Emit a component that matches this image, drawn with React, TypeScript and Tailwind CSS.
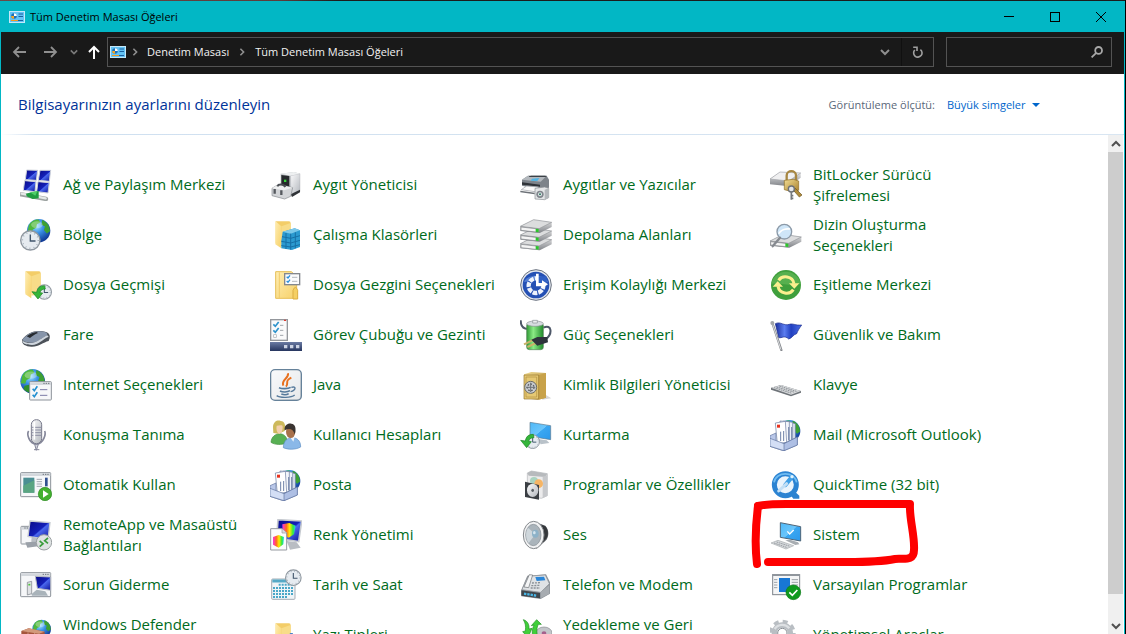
import type { ReactNode } from 'react'

type DiscProps = { cx: number; cy: number; r: number }

/** Shared gradients, referenced by every control panel icon. */
function IconDefs() {
  return (
    <svg className="absolute h-0 w-0" aria-hidden="true">
      <defs>
        <linearGradient id="screen" x1="0" y1="0" x2="1" y2="1">
          <stop offset="0" stopColor="#0a0a86" />
          <stop offset="0.5" stopColor="#1420b8" />
          <stop offset="0.55" stopColor="#4a68ee" />
          <stop offset="1" stopColor="#0b1096" />
        </linearGradient>
        <linearGradient id="sky" x1="0" y1="0" x2="1" y2="1">
          <stop offset="0" stopColor="#4db8f8" />
          <stop offset="0.5" stopColor="#6cc6fb" />
          <stop offset="0.52" stopColor="#3aa7f2" />
          <stop offset="1" stopColor="#2c98ea" />
        </linearGradient>
        <radialGradient id="sea" cx="0.4" cy="0.3" r="0.75">
          <stop offset="0" stopColor="#a5e6ff" />
          <stop offset="0.4" stopColor="#3b92e6" />
          <stop offset="1" stopColor="#0a2f8c" />
        </radialGradient>
        <linearGradient id="silver" x1="0" y1="0" x2="1" y2="1">
          <stop offset="0" stopColor="#fbfbfc" />
          <stop offset="1" stopColor="#b4b8be" />
        </linearGradient>
        <linearGradient id="steel" x1="0" y1="0" x2="0" y2="1">
          <stop offset="0" stopColor="#e9e9ea" />
          <stop offset="1" stopColor="#808388" />
        </linearGradient>
        <linearGradient id="folder" x1="0" y1="0" x2="1" y2="1">
          <stop offset="0" stopColor="#ffedb2" />
          <stop offset="1" stopColor="#f6d169" />
        </linearGradient>
        <linearGradient id="leaf" x1="0" y1="0" x2="1" y2="0">
          <stop offset="0" stopColor="#2f9a35" />
          <stop offset="0.4" stopColor="#8bea85" />
          <stop offset="1" stopColor="#1f8a2a" />
        </linearGradient>
        <linearGradient id="gold" x1="0" y1="0" x2="1" y2="1">
          <stop offset="0" stopColor="#f2dd94" />
          <stop offset="1" stopColor="#a9812c" />
        </linearGradient>
        <linearGradient id="navy" x1="0" y1="0" x2="0" y2="1">
          <stop offset="0" stopColor="#6b7ba3" />
          <stop offset="1" stopColor="#26355f" />
        </linearGradient>
        <linearGradient id="flag" x1="0" y1="0" x2="1" y2="0">
          <stop offset="0" stopColor="#1b2f9c" />
          <stop offset="0.35" stopColor="#5b7df0" />
          <stop offset="0.6" stopColor="#2140c0" />
          <stop offset="1" stopColor="#4c6fe6" />
        </linearGradient>
        <linearGradient id="rainbow" x1="0" y1="0" x2="1" y2="0">
          <stop offset="0" stopColor="#ff30e0" />
          <stop offset="0.3" stopColor="#ff6a20" />
          <stop offset="0.55" stopColor="#fff000" />
          <stop offset="0.8" stopColor="#30e840" />
          <stop offset="1" stopColor="#20d8f0" />
        </linearGradient>
      </defs>
    </svg>
  )
}

function Globe({ cx, cy, r }: DiscProps) {
  return (
    <g transform={`translate(${cx} ${cy}) scale(${r / 40})`}>
      <circle r="40" fill="url(#sea)" />
      <path d="M-34-18C-26-34-10-39 0-38L6-28-6-22-8-10-20-4-24 8-38 6Z" fill="#4fb83c" />
      <path d="M12-37C30-30 38-16 39 2L28 10 18-2 22-14 10-20Z" fill="#3da033" />
      <path d="M-26 14-8 10 4 22-2 38C-16 37-26 30-30 24Z" fill="#2f8f2c" />
      <ellipse cx="-6" cy="-20" rx="20" ry="12" fill="#fff" opacity="0.3" />
    </g>
  )
}

function Clock({ cx, cy, r }: DiscProps) {
  return (
    <g transform={`translate(${cx} ${cy}) scale(${r / 30})`}>
      <circle r="28" fill="#e6ebf0" stroke="#8f979f" strokeWidth="4" />
      <circle r="23" fill="none" stroke="#8b98a5" strokeWidth="4" strokeDasharray="2 10.04" />
      <path d="M0-17V2H15" fill="none" stroke="#41566b" strokeWidth="4" />
    </g>
  )
}

function BackArrow() {
  return <path d="M24-16C8-16 2-8 0 4L-14 2 4 24 18 6 10 5C12-2 16-6 26-6Z" fill="#35b53a" stroke="#1d8425" strokeWidth="2" />
}

function Frame({ x, y, w, h }: { x: number; y: number; w: number; h: number }) {
  return (
    <g>
      <rect x={x} y={y} width={w} height={h} rx="2" fill="#f6f7f9" stroke="#8c9299" strokeWidth="3" />
      <path d={`M${x + 1} ${y + 6}H${x + w - 1}`} stroke="#d3d7dc" strokeWidth="8" />
      <path d={`M${x + w - 24} ${y + 5}h20`} stroke="#6d747c" strokeWidth="3" strokeDasharray="4 3" />
    </g>
  )
}

const folder = (
  <>
    <path d="M17 7H57Q62 7 62 12V72H17Z" fill="#f3cd68" />
    <path d="M16 6 34 22V88L16 76Z" fill="url(#folder)" />
    <path d="M34 22 62 12V74L34 80Z" fill="#f8dc88" />
  </>
)

const mail = (
  <>
    <Globe cx={58} cy={36} r={33} />
    <path d="M0 50 18 42V66L42 78V96L0 82Z" fill="#b9c7e8" stroke="#5f729f" strokeWidth="2" />
    <path d="M50 7 76 14V64L50 70Z" fill="#dfe6f3" stroke="#66789e" strokeWidth="2" />
    <path d="M40 6 68 10V67L42 72Z" fill="#edf1f8" stroke="#66789e" strokeWidth="2" />
    <path d="M30 6 58 8V70L34 73Z" fill="#f4f6fb" stroke="#66789e" strokeWidth="2" />
    <path d="M16 12 46 7 50 70 22 74Z" fill="#fff" stroke="#66789e" strokeWidth="2" />
    <path d="M32 38V66M41 36V66M56 24V64M65 24V62" stroke="#6f82a8" strokeWidth="3" />
    <path d="M21 17h9v9h-9Z" fill="#e8321e" />
    <path d="M0 58 42 74 82 54V78L42 95 0 82Z" fill="#d3def5" stroke="#5f729f" strokeWidth="2" />
    <path d="M42 74 82 54V78L42 95Z" fill="#aebfe4" stroke="#5f729f" strokeWidth="2" />
  </>
)

const network = (
  <>
    <g stroke="#cfd3da" strokeWidth="3" fill="url(#screen)">
      <path d="M20 3 53 4 49 34 16 32Z" />
      <path d="M60 4 92 4 88 37 55 34Z" />
      <path d="M14 35 48 38 45 68 10 64Z" />
      <path d="M54 38 88 41 84 72 50 68Z" />
    </g>
    <path d="M4 76 78 90" stroke="#9da3a1" strokeWidth="13" strokeLinecap="round" />
    <path d="M5 74 77 88" stroke="#e4e8e6" strokeWidth="7" strokeLinecap="round" />
    <path d="M18 74 34 70 56 66 56 88 38 90 20 82Z" fill="#1f9c40" />
    <path d="M30 70 52 67 46 80Z" fill="#4fce68" />
  </>
)

const region = (
  <>
    <Globe cx={56} cy={35} r={35} />
    <Clock cx={31} cy={64} r={31} />
  </>
)

const fileHistory = (
  <>
    {folder}
    <Clock cx={73} cy={69} r={23} />
    <g transform="translate(50 66)">
      <BackArrow />
    </g>
  </>
)

const mouse = (
  <>
    <path d="M6 62C20 44 40 34 62 36 82 37 92 44 89 58L86 66C70 70 56 84 34 83 18 82 4 76 6 62Z" fill="#4c5259" />
    <path d="M8 61C22 44 42 35 62 37 78 38 86 44 80 50 64 56 52 70 36 71 22 72 8 68 8 61Z" fill="#8795aa" />
    <path d="M7 64C12 71 24 73 36 72 52 70 64 57 82 49L86 53C68 60 56 78 36 78 18 78 6 74 7 64Z" fill="#cfd6de" />
    <path d="M20 52C32 44 40 40 50 39L54 42C44 46 38 51 30 57Z" fill="#272b30" />
  </>
)

const internet = (
  <>
    <Globe cx={38} cy={37} r={37} />
    <Frame x={29} y={38} w={65} h={55} />
    <path d="M38 59 43 65 52 52M38 77 43 83 52 70" fill="none" stroke="#2490d0" strokeWidth="5" />
    <path d="M60 62H82M60 79H82" stroke="#7b7ba6" strokeWidth="3" />
  </>
)

const microphone = (
  <>
    <path d="M26 36C20 44 26 74 49 76 72 74 78 44 74 36" fill="none" stroke="#85879a" strokeWidth="5" />
    <rect x="34" y="2" width="31" height="72" rx="15" fill="url(#silver)" stroke="#77798a" strokeWidth="3" />
    <path d="M35 25H64M35 33H64M35 41H64M35 49H64" stroke="#8e90a4" strokeWidth="3" />
    <path d="M43 8V62" stroke="#fff" strokeWidth="5" />
    <path d="M44 76 49 94 55 76ZM42 92H58" fill="#d6d7df" stroke="#85879a" strokeWidth="3" />
  </>
)

const autoplay = (
  <>
    <Frame x={2} y={11} w={90} h={72} />
    <rect x="10" y="26" width="33" height="45" fill="#4b8f93" />
    <path d="M10 71V50L43 34V71Z" fill="#5aa581" />
    <path d="M50 31H66M50 38H66M50 45H66M50 52H66" stroke="#a2a8b0" strokeWidth="3" />
    <path d="M79 26V52" stroke="#31508f" strokeWidth="8" />
    <circle cx="75" cy="75" r="20" fill="#43b02f" stroke="#2a8a20" strokeWidth="2" />
    <path d="M69 64 86 75 69 86Z" fill="#fff" />
  </>
)

const remoteApp = (
  <>
    <Frame x={3} y={22} w={34} h={53} />
    <path d="M30 6 90 11 84 62 24 52Z" fill="url(#screen)" stroke="#c9cdd2" strokeWidth="4" />
    <path d="M36 54 60 58 56 72 34 68Z" fill="#b9bec5" />
    <path d="M16 70 48 68 54 82 22 86Z" fill="#9ba1a9" />
    <circle cx="72" cy="70" r="23" fill="#dfe3e3" stroke="#9a9fa2" strokeWidth="3" />
    <path d="M59 66 69 74 59 83M84 57 74 65 84 73" fill="none" stroke="#3a9d3c" strokeWidth="5" />
  </>
)

const troubleshoot = (
  <>
    <Frame x={2} y={11} w={90} h={72} />
    <path d="M22 40 35 37V74L22 78Z" fill="#dfe1e4" stroke="#777c83" strokeWidth="2" />
    <path d="M25 47H31" stroke="#4cc339" strokeWidth="5" />
    <path d="M46 22 92 24V64L52 58Z" fill="url(#screen)" stroke="#b6bac2" strokeWidth="3" />
    <path d="M34 76 50 62 76 67 84 80H36Z" fill="#a9b3ba" />
  </>
)

const firewall = (
  <>
    <Globe cx={65} cy={30} r={28} />
    <path d="M4 36 26 28 74 38V96H4Z" fill="#a5553c" />
    <path d="M4 36 26 28 74 38 56 44Z" fill="#d39a7c" />
    <path d="M4 52 74 56M4 68 74 72M4 84H74M24 40V52M44 42V54M14 54V68M36 55V70M58 44V70M26 70V84" stroke="#e0b49e" strokeWidth="2" />
  </>
)

const deviceManager = (
  <>
    <path d="M32 14 72 9 90 14V66L52 76 32 66Z" fill="#c0c3c7" />
    <path d="M62 20 90 14V68L62 74Z" fill="url(#silver)" stroke="#a4a8ad" strokeWidth="1" />
    <path d="M32 14 72 9 90 14 60 20Z" fill="#eef0f1" />
    <path d="M34 18 58 21V56L34 50Z" fill="#26292c" />
    <rect x="42" y="32" width="7" height="7" fill="#38d43b" />
    <path d="M62 76 90 62V70L66 84Z" fill="#303337" />
    <path d="M6 58 26 46 68 56 62 82 44 90 6 80Z" fill="#d3d5d8" stroke="#85898e" strokeWidth="2" />
    <path d="M6 58 42 64 68 56 26 46Z" fill="#eff0f1" />
    <path d="M14 60V74M34 64V78" stroke="#55595e" strokeWidth="7" />
    <path d="M22 52C26 44 40 44 46 54" fill="none" stroke="#4a4e53" strokeWidth="6" />
  </>
)

const workFolders = (
  <>
    {folder}
    <path d="M38 38 74 28 90 34V84L66 93 34 88V66Z" fill="#2b9ad0" />
    <path d="M38 38 74 28 90 34 62 44Z" fill="#7cc9ea" />
    <path d="M62 44V92M36 53 62 58 90 50M34 67 62 72 90 64M34 80 62 84 90 77M48 42V90M76 40V88" fill="none" stroke="#1670a6" strokeWidth="3" />
  </>
)

const explorerOptions = (
  <>
    <path d="M17 8H64L80 22V88H17Z" fill="url(#folder)" stroke="#e7bf57" strokeWidth="3" />
    <path d="M28 10V88" stroke="#f1cc6a" strokeWidth="3" />
    <rect x="44" y="14" width="45" height="33" fill="#fcfcfd" stroke="#84888e" strokeWidth="4" />
    <path d="M50 23 54 27 60 19M50 36 54 40 60 32" fill="none" stroke="#2a8fdb" strokeWidth="4" />
    <path d="M66 25H82M66 37H82" stroke="#b4b8be" strokeWidth="3" />
    <path d="M69 64Q76 46 83 64V90H69Z" fill="#f5cf63" stroke="#dcae42" strokeWidth="3" />
  </>
)

const taskbar = (
  <>
    <rect x="2" y="2" width="50" height="62" fill="#fafafb" stroke="#94979c" strokeWidth="4" />
    <path d="M42 4H48" stroke="#df3b31" strokeWidth="4" />
    <path d="M10 16 16 22 26 9M10 34 16 40 26 27" fill="none" stroke="#2e93cc" strokeWidth="5" />
    <rect x="11" y="47" width="8" height="8" fill="none" stroke="#a9adb1" strokeWidth="2" />
    <path d="M30 19H40M30 34H40M30 49H40" stroke="#a1a5aa" strokeWidth="3" />
    <rect y="69" width="96" height="27" fill="url(#navy)" />
    <path d="M42 83h10M60 83h10M78 83h10" stroke="#cdd4e4" strokeWidth="10" />
  </>
)

const java = (
  <>
    <rect x="2" y="2" width="92" height="92" rx="13" fill="url(#silver)" stroke="#66829a" strokeWidth="4" />
    <rect x="5" y="5" width="86" height="86" rx="10" fill="#f7f8f9" opacity="0.75" />
    <path d="M54 13C58 28 32 32 40 50M64 26C42 36 58 42 48 53" fill="none" stroke="#e8701d" strokeWidth="6" />
    <path d="M27 56C36 60 54 60 62 55M30 66C38 70 52 70 60 65M34 75C42 78 50 78 56 74" fill="none" stroke="#55799b" strokeWidth="5" />
    <path d="M64 55C80 50 78 64 62 68" fill="none" stroke="#55799b" strokeWidth="4" />
    <path d="M20 80C30 87 64 87 74 78" fill="none" stroke="#55799b" strokeWidth="4" />
  </>
)

const users = (
  <>
    <path d="M3 70C4 52 18 44 30 44 44 46 52 54 52 72 36 78 14 78 3 70Z" fill="#58b053" stroke="#3f8b3c" strokeWidth="2" />
    <path d="M9 24C10 6 24 2 32 6 44 6 48 20 44 36L26 44 10 42Z" fill="#cdb95c" />
    <path d="M20 20C28 20 38 16 38 24 38 38 32 46 27 44 20 40 18 30 20 20Z" fill="#f3cfae" />
    <path d="M40 86C40 66 52 56 66 56 82 56 92 66 92 84 76 93 54 92 40 86Z" fill="#8ab8e8" stroke="#5a8cc2" strokeWidth="2" />
    <path d="M60 54H74L70 68Z" fill="#f1f5fa" />
    <ellipse cx="62" cy="38" rx="14" ry="19" fill="#a8714b" />
    <path d="M44 34C42 18 54 12 64 14 76 14 80 30 74 46 70 30 58 26 44 34Z" fill="#3a3431" />
  </>
)

const colorManagement = (
  <>
    <path d="M24 2 95 6 86 68 20 58Z" fill="url(#screen)" stroke="#c6cad0" strokeWidth="5" />
    <path d="M50 66 80 70 92 86 60 92Z" fill="#b9bdc3" />
    <path d="M37 16 58 12 77 20 72 46 56 56 38 46Z" fill="url(#rainbow)" />
    <path d="M2 29H36L50 42V93H2Z" fill="#fbfbfc" stroke="#95999f" strokeWidth="3" />
    <path d="M36 29V42H50" fill="#dadde1" stroke="#95999f" strokeWidth="2" />
    <path d="M9 54 26 48 42 54 40 76 26 86 9 77Z" fill="url(#rainbow)" />
  </>
)

const dateTime = (
  <>
    <rect x="5" y="30" width="70" height="61" rx="3" fill="#eff4f7" stroke="#a5adb5" strokeWidth="3" />
    <path d="M7 36H74" stroke="#55a9c6" strokeWidth="9" />
    <path d="M26 47H70M9 57H70M9 66H70M9 75H70M9 84H52" stroke="#4aa7c8" strokeWidth="6" strokeDasharray="6 3" />
    <Clock cx={70} cy={26} r={25} />
  </>
)

const fonts = (
  <>
    <g transform="translate(0 6)">{folder}</g>
    <path d="M44 92 60 42H68L86 92H74L70 78H58L54 92Z" fill="#4a86c8" />
  </>
)

const printer = (
  <>
    <path d="M6 32 24 20H80L87 32V56L60 62 6 50Z" fill="#7d838a" />
    <path d="M6 32 24 20H80L62 38Z" fill="#b3b8bd" />
    <path d="M26 22 34 20H76L80 24H28Z" fill="#3b4046" />
    <path d="M36 29 58 27 52 36 32 35Z" fill="#4fb4e4" />
    <path d="M6 40 60 47V53L6 47Z" fill="#2f3338" />
    <path d="M4 62 20 51 56 54 44 68Z" fill="#fafafa" stroke="#9b9fa4" strokeWidth="2" />
    <path d="M1 65 44 71V76L1 70Z" fill="#6d7278" />
    <path d="M45 58 74 54 86 58V86L74 92 45 90Z" fill="#e3e5e7" stroke="#8a8e93" strokeWidth="2" />
    <path d="M74 62 86 58V86L74 92Z" fill="#b4b8bc" />
    <circle cx="60" cy="76" r="11" fill="#80868c" />
    <circle cx="60" cy="76" r="6" fill="#dfe6ec" />
    <circle cx="60" cy="76" r="3" fill="#2e7a5c" />
  </>
)

function Drive() {
  return (
    <>
      <path d="M0 20 40 0 94 8V22L58 40 0 34Z" fill="url(#steel)" />
      <path d="M0 20 40 0 94 8 56 27Z" fill="#dcddde" stroke="#94979b" strokeWidth="2" />
      <path d="M2 22 55 28V38L2 32Z" fill="#f4f4f4" stroke="#85888d" strokeWidth="2" />
      <path d="M46 27 55 28V38L46 37Z" fill="#2cc52c" />
    </>
  )
}

const storage = (
  <>
    <g transform="translate(1 54)">
      <Drive />
    </g>
    <g transform="translate(1 28)">
      <Drive />
    </g>
    <g transform="translate(1 2)">
      <Drive />
    </g>
  </>
)

const easeOfAccess = (
  <>
    <circle cx="48" cy="48" r="46" fill="#e3e7ee" stroke="#6b7380" strokeWidth="3" />
    <circle cx="48" cy="48" r="40" fill="#2450b4" />
    <path d="M12 40C18 14 78 14 84 40 60 30 36 34 12 40Z" fill="#6f9ae6" opacity="0.6" />
    <circle cx="48" cy="50" r="22" fill="none" stroke="#eef3fc" strokeWidth="13" strokeDasharray="14 3.3" strokeDashoffset="4" pathLength="138" />
    <path d="M48 50V22H80V50Z" fill="#2f60c4" />
    <path d="M48 52V14H56V42H66V34L84 46 66 58V52Z" fill="#fff" />
  </>
)

const power = (
  <>
    <path d="M2 4C2 24 12 30 24 30" fill="none" stroke="#4d5768" strokeWidth="6" />
    <path d="M70 26C96 14 98 44 78 60" fill="none" stroke="#4d5768" strokeWidth="6" />
    <rect x="20" y="12" width="50" height="80" rx="8" fill="url(#leaf)" stroke="#58805a" strokeWidth="2" />
    <ellipse cx="45" cy="14" rx="25" ry="8" fill="#d7dce0" stroke="#8b9196" strokeWidth="2" />
    <path d="M38 4H52V12H38Z" fill="#eceef0" stroke="#8b9196" strokeWidth="2" />
    <path d="M12 76 42 62M22 84 48 72" stroke="#c9b268" strokeWidth="6" />
    <path d="M34 62 52 54 82 54 84 70 52 80Z" fill="#2e333c" />
  </>
)

const credentials = (
  <>
    <path d="M74 76 94 88 66 92Z" fill="#d6d6d6" />
    <path d="M12 16 34 9 78 12V86L54 92 12 88Z" fill="url(#gold)" />
    <path d="M56 18 78 12V86L56 92Z" fill="#c8a24a" />
    <path d="M12 18H56V90H12Z" fill="#e5c873" stroke="#94742a" strokeWidth="2" />
    <path d="M18 24H50V84H18Z" fill="none" stroke="#b3903f" strokeWidth="2" />
    <circle cx="32" cy="55" r="18" fill="#c8cbcf" stroke="#6b6b66" strokeWidth="3" />
    <circle cx="32" cy="55" r="10" fill="none" stroke="#5d6065" strokeWidth="4" strokeDasharray="5 4" />
    <path d="M32 41V69M18 55H46" stroke="#6d7176" strokeWidth="3" />
  </>
)

const recovery = (
  <>
    <path d="M30 10 92 20V62L30 52Z" fill="url(#sky)" stroke="#5c7a90" strokeWidth="2" />
    <path d="M54 60 80 64 88 72 62 76Z" fill="#b9c2c9" />
    <Clock cx={38} cy={68} r={22} />
    <g transform="translate(16 62)">
      <BackArrow />
    </g>
  </>
)

const programs = (
  <>
    <path d="M22 12 34 6 82 14V80L64 88 22 82Z" fill="#ebebec" stroke="#b4b6b9" strokeWidth="2" />
    <path d="M22 12 34 6 82 14 76 24 26 20Z" fill="#b7babd" />
    <path d="M68 24 82 18V80L68 88Z" fill="#c6c8cb" />
    <circle cx="42" cy="36" r="12" fill="#a9d3c0" />
    <circle cx="56" cy="44" r="13" fill="#f6b565" />
    <path d="M15 38 57 48V92L15 84Z" fill="#3a3e43" />
    <ellipse cx="38" cy="64" rx="17" ry="20" fill="url(#silver)" />
    <ellipse cx="38" cy="64" rx="4" ry="5" fill="#5a6065" />
  </>
)

const sound = (
  <>
    <path d="M44 8 76 20C88 32 88 54 76 66L48 90Z" fill="#63676b" />
    <path d="M60 16 76 22C86 34 86 52 76 62L58 80Z" fill="#34373a" />
    <ellipse cx="41" cy="48" rx="31" ry="41" fill="#f1f2f3" stroke="#83878b" strokeWidth="3" />
    <ellipse cx="40" cy="48" rx="23" ry="32" fill="#aab4bb" stroke="#82898f" strokeWidth="2" />
    <path d="M46 46 24 26C16 38 16 60 26 72Z" fill="#cfd7dc" />
    <ellipse cx="46" cy="44" rx="10" ry="12" fill="#8db2c8" />
    <ellipse cx="43" cy="41" rx="4" ry="5" fill="#d4e4ee" />
  </>
)

const phone = (
  <>
    <path d="M4 62 22 20 78 16 90 40V74L62 90 4 82Z" fill="#8b9197" />
    <path d="M6 62 24 22 76 18 88 44 62 70Z" fill="#dfe2e5" stroke="#8e9398" strokeWidth="2" />
    <path d="M46 24 72 23 76 34 50 36Z" fill="#2a86d8" />
    <path d="M12 54 28 17 38 18 26 56Z" fill="#f4f5f6" stroke="#6a6e73" strokeWidth="2" />
    <path d="M36 42 60 41M34 50 60 49M32 57 60 57" stroke="#8a9096" strokeWidth="4" strokeDasharray="6 3" />
    <path d="M4 64 60 72V88L4 80Z" fill="#40464c" />
    <path d="M12 74 50 80" stroke="#4ab8e8" strokeWidth="7" strokeDasharray="7 3" />
    <path d="M62 70 88 48V74L62 88Z" fill="#a7acb1" />
  </>
)

const backup = (
  <>
    <ellipse cx="72" cy="42" rx="24" ry="18" fill="#c3c6ca" stroke="#85898e" strokeWidth="2" />
    <ellipse cx="72" cy="42" rx="7" ry="5" fill="#a5608c" />
    <path d="M10 2C24 6 28 18 27 30L36 28 24 56 8 38 16 36C18 22 16 12 10 2Z" fill="#40cf3a" stroke="#1f8f22" strokeWidth="2" />
    <path d="M42 60C34 46 36 30 42 18L34 20 50 2 64 16 55 16C48 30 50 46 56 60Z" fill="#40cf3a" stroke="#1f8f22" strokeWidth="2" />
  </>
)

const bitlocker = (
  <>
    <path d="M0 30 30 9 92 12V26L58 52 0 46Z" fill="url(#steel)" />
    <path d="M0 30 30 9 92 12 56 36Z" fill="#f0f0f1" stroke="#a0a3a7" strokeWidth="2" />
    <path d="M50 36V20C50 2 78 2 78 20V36" fill="none" stroke="#a78742" strokeWidth="7" />
    <path d="M43 34 70 31 86 36V64L66 68 43 62Z" fill="url(#gold)" stroke="#8c6b22" strokeWidth="2" />
    <path d="M76 58 96 78 88 84 72 66Z" fill="#b08c3c" stroke="#6b5320" strokeWidth="2" />
    <circle cx="64" cy="60" r="9" fill="#e4e6e9" stroke="#6d7176" strokeWidth="4" />
    <path d="M64 68V92M64 80H70M64 88H70" stroke="#75797e" strokeWidth="5" />
  </>
)

const indexing = (
  <>
    <g transform="translate(0 46)">
      <Drive />
    </g>
    <circle cx="43" cy="38" r="22" fill="#cfe6f8" stroke="#8c9aa8" strokeWidth="4" />
    <path d="M26 44C32 34 46 28 60 30" fill="none" stroke="#fff" strokeWidth="5" />
    <path d="M30 56 8 82" stroke="#85898f" strokeWidth="7" strokeLinecap="round" />
  </>
)

const sync = (
  <>
    <circle cx="48" cy="48" r="45" fill="#3f9f3c" />
    <path d="M4 44A45 45 0 0 1 92 44C70 54 30 40 4 44Z" fill="#62b855" opacity="0.7" />
    <path d="M26 34C36 18 68 20 72 44" fill="none" stroke="#fbef8e" strokeWidth="9" />
    <path d="M70 62C60 78 28 76 24 52" fill="none" stroke="#fbef8e" strokeWidth="9" />
    <path d="M57 43H88L73 59ZM8 53H39L23 37Z" fill="#fbef8e" />
  </>
)

const security = (
  <>
    <path d="M16 14C32 6 42 22 58 16 68 12 76 20 95 18 88 28 84 34 80 44 70 46 66 58 56 60 44 48 36 58 26 56Z" fill="url(#flag)" stroke="#16288a" strokeWidth="2" />
    <path d="M7 12 34 93" stroke="#85888d" strokeWidth="7" strokeLinecap="round" />
    <path d="M7 13 33 92" stroke="#dcdee0" strokeWidth="3" />
    <circle cx="7" cy="12" r="6" fill="#a3a6aa" />
  </>
)

const keyboard = (
  <>
    <path d="M3 56 33 48 93 66V71L63 82 3 62Z" fill="#6f7479" />
    <path d="M3 56 33 48 93 66 63 77Z" fill="#d9dbdd" />
    <path d="M12 56 66 73M20 54 74 70M28 51 82 68" stroke="#8f9499" strokeWidth="3" strokeDasharray="5 2" />
  </>
)

const quicktime = (
  <>
    <path d="M50 62 62 56 88 80V89H70Z" fill="#2c82cf" />
    <circle cx="46" cy="47" r="33" fill="#eaf4fc" stroke="#2b83d2" strokeWidth="15" />
    <path d="M12 40C18 6 74 6 80 40" fill="none" stroke="#6fbcf2" strokeWidth="5" />
    <path d="M46 48 64 26" stroke="#3f9fe6" strokeWidth="13" strokeLinecap="round" />
    <path d="M26 66 50 44" stroke="#c2dff5" strokeWidth="9" strokeLinecap="round" />
    <circle cx="66" cy="23" r="5" fill="#dff2fd" />
  </>
)

const system = (
  <>
    <path d="M31 11 92 23V66L31 55Z" fill="url(#sky)" stroke="#4e6477" strokeWidth="3" />
    <path d="M52 37 59 45 71 33" fill="none" stroke="#fff" strokeWidth="4" />
    <path d="M46 64 60 62 84 70 88 76 76 78Z" fill="#a8adb2" />
    <path d="M3 72 24 64 71 80 48 90Z" fill="#d6d9dc" stroke="#a6aaae" strokeWidth="2" />
    <path d="M12 72 52 86M20 69 60 82" stroke="#999ea3" strokeWidth="3" strokeDasharray="5 2" />
  </>
)

const defaults = (
  <>
    <rect x="8" y="17" width="81" height="60" fill="#f4f5f6" stroke="#7f858c" strokeWidth="3" />
    <path d="M7 18H90" stroke="#8f959c" strokeWidth="6" />
    <rect x="27" y="27" width="33" height="42" fill="#1877d4" />
    <path d="M12 32H22M12 40H22M12 48H22M12 56H22M65 32H84M65 40H84M65 48H84" stroke="#9aa0a6" strokeWidth="3" />
    <circle cx="70" cy="70" r="22" fill="#0f9a1e" stroke="#0a7c16" strokeWidth="2" />
    <path d="M58 70 67 79 82 63" fill="none" stroke="#fff" strokeWidth="5" />
  </>
)

const gears = (
  <>
    <circle cx="37" cy="42" r="24" fill="none" stroke="#b9bec3" strokeWidth="16" />
    <circle cx="37" cy="42" r="35" fill="none" stroke="#b9bec3" strokeWidth="10" strokeDasharray="15 12.5" />
    <path d="M14 30A27 27 0 0 1 58 28" fill="none" stroke="#dde0e3" strokeWidth="7" />
    <circle cx="37" cy="42" r="14" fill="#fff" stroke="#878d93" strokeWidth="3" />
  </>
)

type PanelItem = { label: string; icon: ReactNode; marked?: boolean }

const items: PanelItem[] = [
  { label: 'Ağ ve Paylaşım Merkezi', icon: network },
  { label: 'Aygıt Yöneticisi', icon: deviceManager },
  { label: 'Aygıtlar ve Yazıcılar', icon: printer },
  { label: 'BitLocker Sürücü Şifrelemesi', icon: bitlocker },
  { label: 'Bölge', icon: region },
  { label: 'Çalışma Klasörleri', icon: workFolders },
  { label: 'Depolama Alanları', icon: storage },
  { label: 'Dizin Oluşturma Seçenekleri', icon: indexing },
  { label: 'Dosya Geçmişi', icon: fileHistory },
  { label: 'Dosya Gezgini Seçenekleri', icon: explorerOptions },
  { label: 'Erişim Kolaylığı Merkezi', icon: easeOfAccess },
  { label: 'Eşitleme Merkezi', icon: sync },
  { label: 'Fare', icon: mouse },
  { label: 'Görev Çubuğu ve Gezinti', icon: taskbar },
  { label: 'Güç Seçenekleri', icon: power },
  { label: 'Güvenlik ve Bakım', icon: security },
  { label: 'Internet Seçenekleri', icon: internet },
  { label: 'Java', icon: java },
  { label: 'Kimlik Bilgileri Yöneticisi', icon: credentials },
  { label: 'Klavye', icon: keyboard },
  { label: 'Konuşma Tanıma', icon: microphone },
  { label: 'Kullanıcı Hesapları', icon: users },
  { label: 'Kurtarma', icon: recovery },
  { label: 'Mail (Microsoft Outlook)', icon: mail },
  { label: 'Otomatik Kullan', icon: autoplay },
  { label: 'Posta', icon: mail },
  { label: 'Programlar ve Özellikler', icon: programs },
  { label: 'QuickTime (32 bit)', icon: quicktime },
  { label: 'RemoteApp ve Masaüstü Bağlantıları', icon: remoteApp },
  { label: 'Renk Yönetimi', icon: colorManagement },
  { label: 'Ses', icon: sound },
  { label: 'Sistem', icon: system, marked: true },
  { label: 'Sorun Giderme', icon: troubleshoot },
  { label: 'Tarih ve Saat', icon: dateTime },
  { label: 'Telefon ve Modem', icon: phone },
  { label: 'Varsayılan Programlar', icon: defaults },
  { label: 'Windows Defender Güvenlik Duvarı', icon: firewall },
  { label: 'Yazı Tipleri', icon: fonts },
  { label: 'Yedekleme ve Geri Yükleme', icon: backup },
  { label: 'Yönetimsel Araçlar', icon: gears },
]

/** Red hand-drawn outline around one item. */
function Marker() {
  return (
    <svg
      className="pointer-events-none absolute left-0 -top-2.5 h-[68px] w-[170px] overflow-visible"
      viewBox="0 0 170 68"
      fill="none"
      stroke="#fe0000"
      strokeWidth="8"
      strokeLinecap="round"
      strokeLinejoin="round"
      aria-hidden="true"
    >
      <path d="M6 64C4 48 4 30 7 6" />
      <path d="M7 6C20 3 34 4 50 4H159C158 18 164 36 163 50 163 62 152 58 144 59 124 63 100 62 80 62H17" />
    </svg>
  )
}

function PanelIcon() {
  return (
    <svg className="h-3 w-4 shrink-0" viewBox="0 0 16 12" aria-hidden="true">
      <rect x="0.5" y="0.5" width="15" height="11" fill="#62c3f5" stroke="#c5e8fa" />
      <circle cx="5" cy="5" r="2.8" fill="#1d6fb8" />
      <path d="M5 5V2.2A2.8 2.8 0 0 1 7.8 5Z" fill="#fff" />
      <path d="M2.2 5A2.8 2.8 0 0 0 5 7.8V5Z" fill="#f5a623" />
      <path d="M9.5 3H14M9.5 5.5H14" stroke="#1a5f9e" />
      <path d="M2 9.5H9" stroke="#f39a1d" />
      <path d="M9 9.5H14" stroke="#1a5f9e" />
    </svg>
  )
}

function Chevron({ className, d, width = 2 }: { className: string; d: string; width?: number }) {
  return (
    <svg className={className} viewBox="0 0 10 10" fill="none" stroke="currentColor" strokeWidth={width} aria-hidden="true">
      <path d={d} />
    </svg>
  )
}

function TitleBar() {
  return (
    <header className="flex h-[31px] shrink-0 items-stretch bg-[#02b7c5] pl-2 text-black">
      <div className="flex flex-1 items-center gap-[5px]">
        <PanelIcon />
        <h1 className="text-[11px] leading-4">Tüm Denetim Masası Öğeleri</h1>
      </div>
      <button className="flex w-[46px] items-center justify-center" aria-label="Simge durumuna küçült">
        <span className="h-px w-2.5 bg-black" />
      </button>
      <button className="flex w-[46px] items-center justify-center" aria-label="Ekranı kapla">
        <span className="h-2.5 w-2.5 border border-black" />
      </button>
      <button className="flex w-[46px] items-center justify-center" aria-label="Kapat">
        <Chevron className="h-2.5 w-2.5" d="M0 0 10 10M10 0 0 10" width={1} />
      </button>
    </header>
  )
}

function NavBar() {
  return (
    <nav className="flex h-[42px] shrink-0 items-start bg-[#191919] pt-[5px] pr-3 text-[#f2f2f2]">
      <div className="flex h-[30px] w-[106px] shrink-0 items-center pl-[11px]">
        <button className="w-[30px] text-[#8f8f8f]" aria-label="Geri">
          <svg className="h-4 w-4" viewBox="0 0 16 16" fill="none" stroke="currentColor" strokeWidth="1.8">
            <path d="M14 8H2M7 3 2 8l5 5" />
          </svg>
        </button>
        <button className="w-7 text-[#8f8f8f]" aria-label="İleri">
          <svg className="h-4 w-4" viewBox="0 0 16 16" fill="none" stroke="currentColor" strokeWidth="1.8">
            <path d="M2 8H14M9 3l5 5-5 5" />
          </svg>
        </button>
        <button className="w-4 text-[#7a7a7a]" aria-label="Son konumlar">
          <Chevron className="h-2 w-2" d="M1 3 5 7 9 3" />
        </button>
        <button className="text-white" aria-label="Yukarı">
          <svg className="h-4 w-4" viewBox="0 0 16 16" fill="none" stroke="currentColor" strokeWidth="2">
            <path d="M8 15V3M3 8l5-5 5 5" />
          </svg>
        </button>
      </div>
      <div className="flex h-[30px] flex-1 items-center border border-[#535353] pl-0.5 text-[11px] leading-4">
        <PanelIcon />
        <Chevron className="mr-2 ml-[5px] h-2 w-2 shrink-0 text-[#8f8f8f]" d="M3 1 7 5 3 9" />
        <button>Denetim Masası</button>
        <Chevron className="mx-[9px] h-2 w-2 shrink-0 text-[#8f8f8f]" d="M3 1 7 5 3 9" />
        <button>Tüm Denetim Masası Öğeleri</button>
        <button className="ml-auto flex h-full w-8 items-center justify-center text-[#8f8f8f]" aria-label="Önceki konumlar">
          <Chevron className="h-2.5 w-2.5" d="M1 3 5 7 9 3" />
        </button>
        <button className="flex h-full w-8 items-center justify-center border-l border-[#101010] text-[#a0a0a0]" aria-label="Yenile">
          <svg className="h-3 w-3" viewBox="0 0 12 12" fill="none" stroke="currentColor" strokeWidth="1.6">
            <path d="M2.8 4A4.2 4.2 0 1 0 8.4 3.6M1.2 1.3H5V5" />
          </svg>
        </button>
      </div>
      <div className="ml-3 flex h-[30px] w-[166px] shrink-0 items-center border border-[#535353] pr-2">
        <input className="min-w-0 flex-1 bg-transparent px-2 text-[11px] outline-none" type="search" aria-label="Ara" />
        <svg className="h-3 w-3 text-[#a8a8a8]" viewBox="0 0 12 12" fill="none" stroke="currentColor" strokeWidth="1.8" aria-hidden="true">
          <circle cx="7.6" cy="4.4" r="3.4" />
          <path d="M5.2 6.8 0.6 11.4" />
        </svg>
      </div>
    </nav>
  )
}

function ScrollBar() {
  return (
    <div className="flex w-4 shrink-0 flex-col border-r border-white bg-[#f0f0f0] text-[#505050]">
      <button className="flex h-[17px] items-center justify-center" aria-label="Yukarı kaydır">
        <Chevron className="h-2.5 w-2.5" d="M1 7 5 3 9 7" />
      </button>
      <div className="flex-1">
        <div className="h-[95%] bg-[#cdcdcd]" />
      </div>
      <button className="flex h-[17px] items-center justify-center" aria-label="Aşağı kaydır">
        <Chevron className="h-2.5 w-2.5" d="M1 3 5 7 9 3" />
      </button>
    </div>
  )
}

export default function App() {
  return (
    <div className="flex h-screen flex-col overflow-hidden bg-black pr-px font-['Open_Sans','Noto_Sans',sans-serif]">
      <IconDefs />
      <div className="h-px shrink-0 bg-linear-to-r from-[#6b4a48] via-[#5c3c3a] via-25% to-[#1c1c1c] to-30%" />
      <div className="flex min-h-0 flex-1 flex-col border-x border-[#02b7c5] bg-white">
        <TitleBar />
        <NavBar />
        <div className="flex h-[60px] shrink-0 items-center justify-between pr-[84px] pl-[17px]">
          <h2 className="text-[15px] leading-5 text-[#003399]">Bilgisayarınızın ayarlarını düzenleyin</h2>
          <div className="flex items-center pt-0.5 text-[11px] leading-4">
            <label htmlFor="view" className="mr-3 text-[#5a6779]">
              Görüntüleme ölçütü:
            </label>
            <select id="view" className="appearance-none bg-transparent text-[#0066cc] outline-none">
              <option>Büyük simgeler</option>
            </select>
            <svg className="ml-1.5 h-1 w-2" viewBox="0 0 8 4" fill="#0066cc" aria-hidden="true">
              <path d="M0 0H8L4 4Z" />
            </svg>
          </div>
        </div>
        <div className="h-px shrink-0 bg-linear-to-r from-white via-[#cfe0f0] via-3% to-[#d9e6f2]" />
        <div className="flex min-h-0 flex-1">
          <main className="grid flex-1 auto-rows-[50px] grid-cols-[repeat(auto-fill,250px)] overflow-hidden pt-[25px]">
            {items.map((item) => (
              <a key={item.label} href="#" className="relative flex items-center gap-[11px] pl-[19px]">
                <svg className="h-8 w-8 shrink-0" viewBox="0 0 96 96" aria-hidden="true">
                  {item.icon}
                </svg>
                <span className="pb-px text-[15px] leading-[21px] text-[#006b1c]">{item.label}</span>
                {item.marked && <Marker />}
              </a>
            ))}
          </main>
          <ScrollBar />
        </div>
      </div>
    </div>
  )
}
